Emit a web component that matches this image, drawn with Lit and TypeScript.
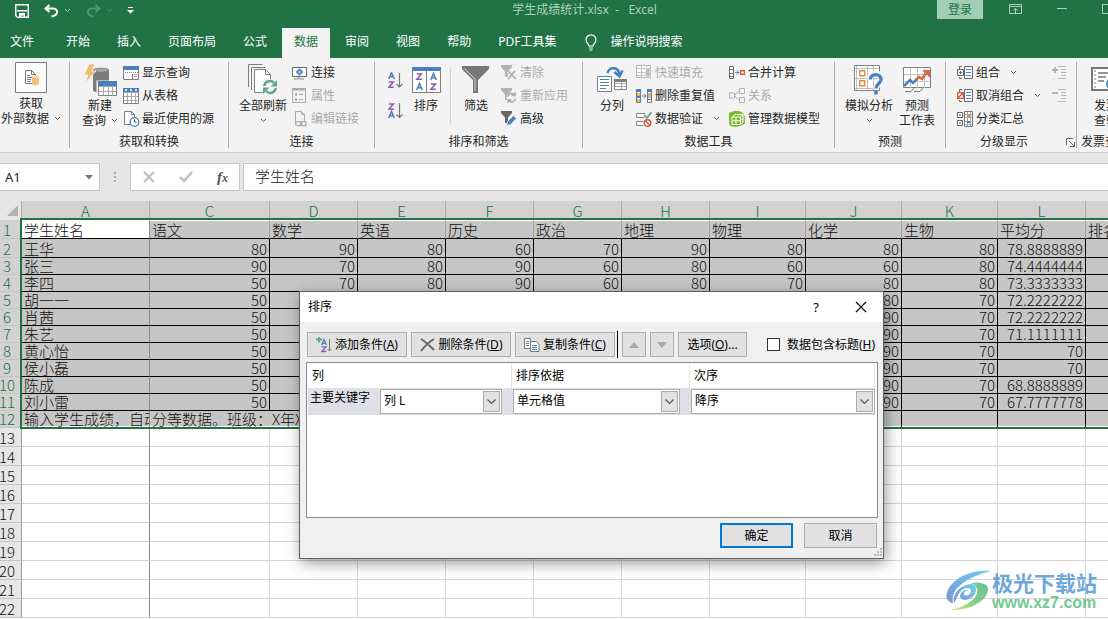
import { LitElement, html, svg, css, nothing, TemplateResult } from "lit";
import { customElement, property } from "lit/decorators.js";
import { classMap } from "lit/directives/class-map.js";

const G = "#7f7f7f";
const B = "#4a81bd";

const grid = (x: number, y: number, w: number, h: number, c: number, r: number, col = G, inner = "#a9a9a9") => {
  const parts: string[] = [];
  for (let i = 1; i < c; i++) parts.push(`M${x + Math.round((w / c) * i) + 0.5} ${y}v${h}`);
  for (let i = 1; i < r; i++) parts.push(`M${x} ${y + Math.round((h / r) * i) + 0.5}h${w}`);
  return svg`<path d="M${x} ${y}h${w}v${h}h${-w}z" fill="#fff"/>
    <path d=${parts.join("")} fill="none" stroke=${inner}/>
    <path d="M${x + 0.5} ${y + 0.5}h${w - 1}v${h - 1}h${1 - w}z" fill="none" stroke=${col}/>`;
};

const funnel = (c: string) => svg`<path d="M0 0h11v2L7 6.500V12H4V6.500L0 2z" fill=${c}/>`;
function glyph(k: string, x: number, y: number) {
  return k === "A"
    ? svg`<path transform="translate(${x} ${y})" d="M.7 7L3.5.5 6.3 7M1.6 4.8h3.8" fill="none" stroke=${B} stroke-width="1.5"/>`
    : svg`<path transform="translate(${x} ${y})" d="M.8.9h4.6L.9 6.2h4.9" fill="none" stroke="#8e5bb0" stroke-width="1.5"/>`;
}

const icons: Record<string, [number, number, TemplateResult]> = {
  save: [14, 14, svg`<path d="M.75.75h12.5v12.5H2.5L.75 11.5z" fill="none" stroke="#fff" stroke-width="1.5"/><path d="M2 6.8h10" stroke="#fff" stroke-width="1.5"/><path d="M4 9h6v5H8.500v-2.500H6.500V14H4z" fill="#fff"/>`],
  undo: [15, 14, svg`<path d="M5.500 1L1.500 4.500l4 3.500M2 4.500h6.500c6.500 0 6 7-1 8" fill="none" stroke="#fff" stroke-width="2"/>`],
  redo: [15, 14, svg`<path d="M9.500 1l4 3.500-4 3.500M13 4.500H6.500c-6.500 0-6 7 1 8" fill="none" stroke="#54936d" stroke-width="2"/>`],
  customize: [7, 7, svg`<path d="M1 .5h5" stroke="#fff"/><path d="M0 3h7L3.500 6.500z" fill="#fff"/>`],
  chev: [7, 5, svg`<path d="M1 1l2.500 2.500L6 1" fill="none" stroke="currentColor" stroke-width="1"/>`],
  bulb: [12, 17, svg`<path d="M4 12c0-2-3-3-3-6.200a5 5 0 0 1 10 0C11 9 8 10 8 12zM4 14h4M4.500 16h3" fill="none" stroke="#fff" stroke-width="1.200"/>`],
  ribbonopt: [13, 10, svg`<path d="M.5.5h12v9H.5zM0 2.500h13M6.500 9V4.500M4.500 6.500l2-2 2 2" fill="none" stroke="#a9d2ba"/>`],
  min: [10, 10, svg`<path d="M0 4.500h10" stroke="#a9d2ba"/>`],
  max: [10, 10, svg`<path d="M.5.5h9v9h-9z" fill="none" stroke="#a9d2ba"/>`],
  getdata: [32, 31, svg`<path d="M.5.5h31v30H.5z" fill="#fdfdfd" stroke="#7b7b7b"/><path d="M10.500 8.500h6l4 4v9h-10z" fill="#fff" stroke="#777"/><path d="M16.500 8.500v4h4M12 13.500h3M12 15.500h5M12 17.500h4M12 19.500h4" stroke="#777" fill="none"/><path d="M17 14.500v7c0 2 7 2 7 0v-7z" fill="#edc178"/><ellipse cx="20.500" cy="14.500" rx="3.500" ry="1.300" fill="#f7dca8"/>`],
  newquery: [33, 33, svg`<path d="M9 6c0-3 16-3 16 0v20c0 2-4 2.500-8 2.500S9 28 9 26z" fill="#7c7c7c"/><ellipse cx="17" cy="6" rx="7" ry="1.800" fill="#a5a5a5"/><path d="M5 0h6L8 7h4L1 19l3-8H0z" fill="#edbd72" stroke="#f3f3f3" stroke-width=".8"/><path d="M12.500 16.500H33V33H12.500z" fill="#f3f3f3"/>${grid(14, 17, 19, 15, 4, 3)}<path d="M14 17h19v5H14z" fill=${B}/>`],
  showquery: [16, 14, svg`${grid(0, 0, 16, 14, 1, 1)}<path d="M0 0h16v4H0z" fill=${B}/><path d="M2 6.500h13" stroke=${G} stroke-dasharray="1 1"/><path d="M9.500 8v6" stroke=${G}/><path d="M11 8.500h3M11 10.500h3" stroke="#a9a9a9"/>`],
  fromtable: [16, 16, svg`${grid(0, 0, 16, 16, 4, 4)}<path d="M0 0h16v4H0z" fill=${B}/><path d="M2 2h2M7 2h2M12 2h2" stroke="#fff" stroke-width="1.400"/>`],
  recent: [17, 16, svg`<path d="M1.500.5h7l3 3v10h-10z" fill="#fff" stroke=${G}/><path d="M8.500.5v3h3" fill="none" stroke=${G}/><circle cx="11.500" cy="11" r="4.300" fill="#fff" stroke=${B} stroke-width="1.300"/><path d="M11.500 8.500V11h2" fill="none" stroke="#555"/>`],
  refreshall: [31, 32, svg`<path d="M.5 23V.5h14" fill="none" stroke=${G}/><path d="M3.500 26V3.500h14" fill="none" stroke=${G}/><path d="M6.500 28.500v-23h11l5 5v18z" fill="#fff" stroke=${G}/><path d="M17.500 5.500v5h5" fill="none" stroke=${G}/><circle cx="22" cy="23" r="8" fill="#f3f3f3"/><path d="M16.300 22a5.500 5.500 0 0 1 9.700-3M27.700 24a5.500 5.500 0 0 1-9.700 3" fill="none" stroke="#67a58d" stroke-width="2.500"/><path d="M29 16v6.500h-6.500zM15 30v-6.500h6.500z" fill="#67a58d"/>`],
  connect: [16, 14, svg`<path d="M.5 1.500h14v9H.5z" fill="#fff" stroke="#666"/><path d="M7.500 3.500L10 6 7.500 8.500 5 6z" fill="none" stroke=${B} stroke-width="1.800"/><path d="M2 13h4l1-1.500L8 13h4" stroke="#888" fill="none"/>`],
  props: [14, 15, svg`<path d="M.5.500h13v14H.5z" fill="none" stroke="#aaa"/><path d="M0 1.500h14" stroke="#aaa" stroke-width="2"/><path d="M3.500 5.500h1v2h-1zM3.500 10.500h1v2h-1zM7 6.500h4M7 11.500h4" stroke="#aaa" fill="none"/>`],
  editlink: [15, 16, svg`<path d="M3.500 12V.5h6l3 3V10" fill="none" stroke="#aaa"/><path d="M9.500.5v3h3" fill="none" stroke="#aaa"/><rect x="3.700" y="10.700" width="6" height="4" rx="2" fill="none" stroke="#aaa" stroke-width="1.300"/><rect x="8.300" y="10.700" width="6" height="4" rx="2" fill="none" stroke="#aaa" stroke-width="1.300"/>`],
  asc: [15, 17, svg`${glyph("A", 0, 0)}${glyph("Z", 0, 9)}<path d="M11.500 1v14M8.500 12l3 3 3-3" fill="none" stroke="#777" stroke-width="1.200"/>`],
  desc: [15, 17, svg`${glyph("Z", 0, 0)}${glyph("A", 0, 8)}<path d="M11.500 0v14M8.500 11.500l3 3 3-3" fill="none" stroke="#777" stroke-width="1.200"/>`],
  sort: [29, 26, svg`<path d="M.5.5h28v25H.5z" fill="#fff" stroke=${G}/><path d="M0 0h29v4H0z" fill=${B}/><path d="M14.500 4v22" stroke=${G}/>${glyph("Z", 4, 6)}${glyph("A", 4, 16)}${glyph("A", 18, 6)}${glyph("Z", 18, 16)}`],
  filter: [28, 28, svg`<path d="M0 0h27v3L16 14v13h-5V14L0 3z" fill="#777"/><path d="M2.500 2.500L13 13v12" stroke="#d5d5d5" fill="none"/>`],
  clear: [16, 15, svg`${funnel("#b3b3b3")}<path d="M7 6l8 8M14 6l-7 8" stroke="#f3f3f3" stroke-width="3.500"/><path d="M7 6l8 8M14 6l-7 8" stroke="#a8a8a8" stroke-width="1.600"/>`],
  reapply: [16, 15, svg`${funnel("#b3b3b3")}<circle cx="10.500" cy="9.500" r="5" fill="#f3f3f3"/><path d="M6.500 9a4 4 0 0 1 7-2M14.500 10.500a4 4 0 0 1-7 2M14 4v3.500h-3.500M7 15v-3h3.500" fill="none" stroke="#a8a8a8" stroke-width="1.400"/>`],
  advanced: [16, 15, svg`${funnel("#666")}<path d="M5.500 14.500l1-4L12.500 4.500 15.500 7.500 9.500 13.500z" fill=${B} stroke="#f3f3f3" stroke-width=".8"/>`],
  split: [31, 26, svg`<path d="M.5 9.500h14v15H.5z" fill="#fff" stroke=${G}/><path d="M3 12.500h9M3 15.500h9M3 18.500h9M3 21.500h6" stroke=${B}/>${grid(17, 12, 13, 11, 2, 3)}<path d="M17 12h13v3H17z" fill=${G}/><path d="M10.500 6C12-1 22-.5 22.500 8" fill="none" stroke=${B} stroke-width="2.500"/><path d="M17.500 5l5 4.500 3-6" fill="none" stroke=${B} stroke-width="2.500"/>`],
  flash: [16, 15, svg`${grid(0, 0, 15, 13, 3, 4, "#b3b3b3", "#c4c4c4")}<path d="M10 4h5l-2 4h3l-6 7 1-5H9z" fill="#bcbcbc" stroke="#f3f3f3" stroke-width=".5"/>`],
  dedupe: [16, 14, svg`<path d="M.5.500h4v13h-4zM11.500.500h4v13h-4z" fill="#fff" stroke="#777"/><path d="M0 0h5v3H0zM0 7h5v2H0zM11 0h5v3h-5z" fill=${B}/><path d="M1 4h3v3H1zM1 10h3v3H1zM12 4h3v3h-3z" fill="#e9b565"/><path d="M11 8h5M11 10.500h5" stroke="#777"/><path d="M6 7h4M8 5l2 2-2 2" stroke=${B} fill="none"/>`],
  validate: [16, 16, svg`<path d="M9 2.500H.5v4H8M7 10.500H.5v4H7" fill="#fff" stroke=${G}/><path d="M8 4l3 3 4.500-6" fill="none" stroke="#67a58d" stroke-width="1.800"/><circle cx="11.500" cy="12" r="3.300" fill="#fff" stroke="#d9553b" stroke-width="1.400"/><path d="M9 9.500l5 5" stroke="#d9553b" stroke-width="1.400"/>`],
  consol: [16, 13, svg`${grid(0, 0, 5, 13, 1, 4, "#666", "#777")}<path d="M6 6.500h4M8 4.500l2 2-2 2" stroke=${B} fill="none"/><path d="M11.700 4.700h3.600v3.600h-3.600z" fill="#fff" stroke="#d9553b" stroke-width="1.400"/>`],
  relation: [16, 15, svg`<path d="M.5 5h5v5h-5zM10.500.500h5v5h-5zM10.500 9.500h5v5h-5z" fill="none" stroke="#b0b0b0"/><path d="M6 7l4-4M6 8l4 4" stroke="#b0b0b0"/>`],
  model: [16, 16, svg`<path d="M0 2c4-2.500 10-3 13-.5 3 2 3 4 3 11-4 3-9 4-13 3C0 15 0 14 0 2z" fill="#7cbb2c"/><path d="M3 6l3-2.500h8L11.500 6zM3 6v7.500h8.500V6M11.500 13.500L14 11V3.500M3 9.800h8.500L14 7.500M7 6v7.500" stroke="#fff" fill="none"/>`],
  whatif: [30, 30, svg`<path d="M.5.500h25v25H.5z" fill="#fff" stroke=${G}/><path d="M13.500 1v24M19.500 1v24M2.500 1v24M1 3.500h24M1 13.500h24M1 23.500h24" stroke="#bdbdbd"/><path d="M5.700 5.700h5v5h-5zM5.700 15.700h5v5h-5z" fill="#fff" stroke="#e08b3d" stroke-width="1.400"/><path d="M16 14c0-7 12-7 12 0 0 4-6 4-6 10" stroke="#f3f3f3" stroke-width="6" fill="none"/><path d="M16.500 14.500c0-6.500 10.500-6.500 10.500 0 0 4-5 4-5 9" stroke=${B} stroke-width="3.200" fill="none"/><path d="M20.200 26h3.500v3.500h-3.500z" fill=${B}/>`],
  forecast: [29, 26, svg`<path d="M.5.5h27v20h-27z" fill="#fff" stroke=${G}/><path d="M7.500 1v20M14.500 1v20M21.500 1v20M1 7.500h26M1 14.500h26" stroke="#c4c4c4"/><path d="M2 24.500h6l3-3.500M11 24.500h6l3-3.500" fill="none" stroke=${G}/><path d="M1 19l6-6 3 3 4-4" fill="none" stroke=${B} stroke-width="2.600"/><path d="M13 13l3-3 3 2 5-7" fill="none" stroke="#d9694a" stroke-width="2.600"/><path d="M19 3h8v8z" fill="#d9694a"/>`],
  group: [16, 14, svg`<path d="M5 .5H2.500V3M5 12.500H2.500V11M.500 3.500h6v6h-6zM2 6.500h3M3.500 5v3" fill="none" stroke="#666"/><path d="M7.500.500h8v12h-8z" fill="#fff" stroke="#666"/><path d="M9 3.500h5M9 6.500h5M9 9.500h5" stroke=${B}/>`],
  ungroup: [16, 14, svg`<path d="M5 .5H2.500V3M5 12.500H2.500V11" fill="none" stroke="#666"/><path d="M7.500.500h8v12h-8z" fill="#fff" stroke="#666"/><path d="M9 3.500h5M9 6.500h5M9 9.500h5" stroke=${B}/><path d="M.7 3.700h5.600v5.600H.7zM1 9l5-5" fill="#fff" stroke="#d9553b" stroke-width="1.300"/>`],
  subtotal: [16, 16, svg`<path d="M.5 1.500h5v5h-5zM.500 9.500h5v5h-5zM2 4h2M2 12h2" fill="#fff" stroke="#666"/>${grid(7, 0, 9, 16, 3, 5, "#777")}<path d="M10 4h3v2h-3z" fill="#e08b3d"/><path d="M10 10h3v2h-3z" fill=${B}/>`],
  showdetail: [14, 13, svg`<path d="M0 4h6M3 1v6" stroke="#b0b0b0" stroke-width="1.800"/><path d="M6 .5h8M9 3.500h5M9 6.500h5M9 9.500h5M6 12.500h8" stroke="#b8b8b8"/>`],
  hidedetail: [14, 13, svg`<path d="M0 4h6" stroke="#b0b0b0" stroke-width="1.800"/><path d="M6 .5h8M9 3.500h5M9 6.500h5M9 9.500h5M6 12.500h8" stroke="#b8b8b8"/>`],
  launcher: [9, 9, svg`<path d="M.5 7V.500H7M3 3l5 5M8.500 4v4.500H4" fill="none" stroke="#666"/>`],
  invoice: [30, 26, svg`<rect x="1" y="1" width="26" height="22" fill="#fff" stroke="#777" stroke-width="2"/><path d="M4 3v18" stroke="#777" stroke-dasharray="2 2"/><path d="M7 6h14M7 10h8M7 14h6" stroke="#777" stroke-width="1.600"/><circle cx="21" cy="17" r="6" fill="#3d8fd1"/>`],
  cancel: [12, 12, svg`<path d="M1 1l10 10M11 1L1 11" stroke="#bdbdbd" stroke-width="2"/>`],
  check: [14, 12, svg`<path d="M1 6l4 4 8-9" fill="none" stroke="#bdbdbd" stroke-width="2.400"/>`],
  addlevel: [16, 16, svg`<path d="M0 2.500h6M3 0v5.500" stroke="#67a58d" stroke-width="2"/><path transform="translate(5 2)" d="M.6 6L3 .6 5.400 6M1.500 4.300h3" fill="none" stroke=${B} stroke-width="1.200"/><path transform="translate(5 9)" d="M.8.900h4L.800 5.500h4.500" fill="none" stroke="#8e5bb0" stroke-width="1.300"/><path d="M13.500 2v12M11.500 12l2 2 2-2" fill="none" stroke="#777"/>`],
  del: [16, 14, svg`<path d="M1 1c5 3 9 7 13 11M14 1C9 4 5 8 1 13" stroke="#666" stroke-width="2" fill="none"/>`],
  copy: [16, 14, svg`<path d="M.5.500h6v10h-6z" fill="#fff" stroke="#777"/><path d="M2 3.500h3M2 5.500h3M2 7.500h3" stroke="#777"/><path d="M6.500 3.500h6l2.500 2.500v7.500H6.500z" fill="#fff" stroke="#777"/><path d="M8 7.500h5M8 9.500h5M8 11.500h5" stroke=${B}/>`],
  up: [10, 6, svg`<path d="M0 6l5-6 5 6z" fill="#a9a9a9"/>`],
  down: [10, 6, svg`<path d="M0 0l5 6 5-6z" fill="#a9a9a9"/>`],
  drop: [8, 5, svg`<path d="M0 0h8L4 4.500z" fill="#777"/>`],
  combo: [9, 6, svg`<path d="M.5.500l4 4 4-4" fill="none" stroke="#555" stroke-width="1.200"/>`],
  close: [12, 12, svg`<path d="M1 1l10 10M11 1L1 11" stroke="#111" stroke-width="1.200"/>`],
  grip: [8, 8, svg`<path d="M6 0h2v2H6zM3 3h2v2H3zM6 3h2v2H6zM0 6h2v2H0zM3 6h2v2H3zM6 6h2v2H6z" fill="#b8b8b8"/>`],
  corner: [11, 11, svg`<path d="M11 0v11H0z" fill="#b2b2b2"/>`],
  logo: [46, 42, svg`<defs><linearGradient id="lg1" x1="1" y1="0" x2="0" y2="1"><stop offset="0" stop-color="#5cc8ea"/><stop offset="1" stop-color="#6a86cf"/></linearGradient><linearGradient id="lg2" x1="1" y1="0" x2="0" y2="1"><stop offset="0" stop-color="#4fbb86"/><stop offset=".6" stop-color="#7cc97a"/><stop offset="1" stop-color="#f2e36a"/></linearGradient></defs><path d="M45 1C28-1 10 6 3 18c-5 9-2 14 4 15C4 20 18 8 45 1z" fill="url(#lg1)"/><path d="M8 33c-2-9 6-18 17-19 8 0 6 12-2 15-7 3-11-2-8-6 2-3 6-4 8-3-3 0-5 2-5 4 1 3 6 1 7-2 1-5-6-5-10-1-3 3-4 7-7 12z" fill="url(#lg1)"/><path d="M25 13c9-2 18 1 17 7-1 10-16 21-39 20 14-2 26-9 28-17 1-5-1-8-6-10z" fill="url(#lg2)"/>`],
};

const icon = (name: string) => {
  const [w, h, body] = icons[name];
  return html`<svg width=${w} height=${h} viewBox="0 0 ${w} ${h}" aria-hidden="true">${body}</svg>`;
};

const base = css`
  * { box-sizing: border-box; }
  svg { display: block; flex: none; }
  button, input, select { font: inherit; color: inherit; margin: 0; }
  button { border: 0; padding: 0; background: none; white-space: nowrap; }
`;

@customElement("excel-ribbon")
export class ExcelRibbon extends LitElement {
  static styles = [base, css`
    :host { display: block; background: #f3f3f3; border-bottom: 1px solid #d2d2d2; color: #262626; }
    .ribbon { display: flex; height: 94px; padding-top: 4px; overflow: hidden; }
    .group { display: flex; flex-direction: column; flex: none; height: 86px; border-right: 1px solid #ababab; }
    .body { display: flex; height: 70px; flex: none; }
    .label { display: flex; height: 16px; flex: none; align-items: center; justify-content: center; white-space: nowrap; line-height: 16px; margin-top: 2px; }
    .w-get { width: 70px; } .w-query { width: 159px; } .w-conn { width: 146px; } .w-sort { width: 208px; }
    .w-tools { width: 252px; } .w-fore { width: 111px; } .w-outline { width: 131px; }
    .w-inv { flex: 1 0 90px; border-right: 0; }
    .w-inv .label { justify-content: flex-start; padding-left: 4px; }
    .big { display: flex; flex-direction: column; align-items: center; flex: none; line-height: 15px; }
    .pic { display: flex; height: 36px; align-items: center; }
    .big.short .pic { height: 34px; align-items: flex-start; }
    .line { display: flex; height: 15px; align-items: center; gap: 5px; }
    .line svg, .more svg { color: #555; }
    .col { display: flex; flex-direction: column; flex: none; margin-top: -1px; }
    .small { display: flex; height: 23px; align-items: center; line-height: 16px; }
    .slot { display: flex; width: 19px; }
    .more { margin-left: 10px; }
    .off { color: #aaa; }
    .az { display: flex; flex-direction: column; gap: 14px; padding-top: 10px; flex: none; }
    .rule { width: 1px; height: 56px; margin-top: 6px; background: #d2d2d2; flex: none; }
    .detail { display: flex; flex-direction: column; gap: 10px; margin: 4px 10px 0 auto; }
    .w-get .big { width: 62px; }
    .w-query .body { gap: 4px; padding-left: 11px; } .w-query .big { width: 38px; }
    .w-conn .body { gap: 4px; padding-left: 9px; } .w-conn .big { width: 50px; }
    .w-sort .body { padding-left: 13px; } .w-sort .big { width: 42px; margin: 0 3px 0 2px; }
    .w-sort .rule + .big { margin: 0 4px; }
    .w-tools .body { padding-left: 13px; } .w-tools .big { width: 32px; margin-right: 8px; }
    .w-tools .col { width: 93px; }
    .w-fore .body { gap: 5px; padding-left: 10px; } .w-fore .big { width: 48px; } .w-fore .big + .big { width: 38px; }
    .w-outline .body { padding-left: 11px; }
    .w-outline .label { padding-left: 33px; gap: 38px; }
    .w-inv .body { padding-left: 14px; }
    .w-inv .big { align-items: flex-start; } .w-inv .line { padding-left: 3px; }
  `];

  big(ic: string, l1: string, l2 = "", more = false, short = false) {
    return html`<button class=${classMap({ big: true, short })}>
      <span class="pic">${icon(ic)}</span>
      <span class="line">${l1}</span>
      <span class="line">${l2}${more ? icon("chev") : nothing}</span>
    </button>`;
  }
  small(ic: string, text: string, off = false, more = false) {
    return html`<button class=${classMap({ small: true, off })} ?disabled=${off}>
      <span class="slot">${icon(ic)}</span>${text}${more ? html`<span class="more">${icon("chev")}</span>` : nothing}
    </button>`;
  }
  render() {
    return html`<div class="ribbon">
      <section class="group w-get">
        <div class="body">${this.big("getdata", "获取", "外部数据", true, true)}</div>
      </section>
      <section class="group w-query">
        <div class="body">${this.big("newquery", "新建", "查询", true)}
          <div class="col">${this.small("showquery", "显示查询")}${this.small("fromtable", "从表格")}${this.small("recent", "最近使用的源")}</div>
        </div>
        <div class="label">获取和转换</div>
      </section>
      <section class="group w-conn">
        <div class="body">${this.big("refreshall", "全部刷新", "", true)}
          <div class="col">${this.small("connect", "连接")}${this.small("props", "属性", true)}${this.small("editlink", "编辑链接", true)}</div>
        </div>
        <div class="label">连接</div>
      </section>
      <section class="group w-sort">
        <div class="body">
          <div class="az"><button aria-label="升序">${icon("asc")}</button><button aria-label="降序">${icon("desc")}</button></div>
          ${this.big("sort", "排序")}
          <span class="rule"></span>
          ${this.big("filter", "筛选")}
          <div class="col">${this.small("clear", "清除", true)}${this.small("reapply", "重新应用", true)}${this.small("advanced", "高级")}</div>
        </div>
        <div class="label">排序和筛选</div>
      </section>
      <section class="group w-tools">
        <div class="body">${this.big("split", "分列")}
          <div class="col">${this.small("flash", "快速填充", true)}${this.small("dedupe", "删除重复值")}${this.small("validate", "数据验证", false, true)}</div>
          <div class="col">${this.small("consol", "合并计算")}${this.small("relation", "关系", true)}${this.small("model", "管理数据模型")}</div>
        </div>
        <div class="label">数据工具</div>
      </section>
      <section class="group w-fore">
        <div class="body">${this.big("whatif", "模拟分析", "", true)}${this.big("forecast", "预测", "工作表")}</div>
        <div class="label">预测</div>
      </section>
      <section class="group w-outline">
        <div class="body">
          <div class="col">${this.small("group", "组合", false, true)}${this.small("ungroup", "取消组合", false, true)}${this.small("subtotal", "分类汇总")}</div>
          <div class="detail">${icon("showdetail")}${icon("hidedetail")}</div>
        </div>
        <div class="label"><span>分级显示</span><button aria-label="分级显示设置">${icon("launcher")}</button></div>
      </section>
      <section class="group w-inv">
        <div class="body">${this.big("invoice", "发票", "查验")}</div>
        <div class="label">发票查验</div>
      </section>
    </div>`;
  }
}

const COLUMNS = ["A", "C", "D", "E", "F", "G", "H", "I", "J", "K", "L", ""];
const HEADINGS = ["学生姓名", "语文", "数学", "英语", "历史", "政治", "地理", "物理", "化学", "生物", "平均分", "排名"];
const ROWS: string[][] = [
  ["王华", "80", "90", "80", "60", "70", "90", "80", "80", "80", "78.8888889", ""],
  ["张三", "90", "70", "80", "90", "60", "80", "60", "60", "80", "74.4444444", ""],
  ["李四", "50", "70", "80", "90", "60", "80", "70", "80", "80", "73.3333333", ""],
  ["胡一一", "50", "", "", "", "", "", "", "80", "70", "72.2222222", ""],
  ["肖茜", "50", "", "", "", "", "", "", "90", "70", "72.2222222", ""],
  ["朱艺", "50", "", "", "", "", "", "", "90", "70", "71.1111111", ""],
  ["黄心怡", "50", "", "", "", "", "", "", "90", "70", "70", ""],
  ["侯小磊", "50", "", "", "", "", "", "", "90", "70", "70", ""],
  ["陈成", "50", "", "", "", "", "", "", "90", "70", "68.8888889", ""],
  ["刘小雷", "50", "", "", "", "", "", "", "90", "70", "67.7777778", ""],
];
const EMPTY_ROWS = Array.from({ length: 10 }, (_, i) => 13 + i);

@customElement("excel-sheet")
export class ExcelSheet extends LitElement {
  static styles = [base, css`
    :host { display: block; position: relative; overflow: hidden; background: #fff; color: #111; font-family: "Noto Sans CJK SC", sans-serif; font-size: 15px; }
    table { table-layout: fixed; width: 100%; border-collapse: separate; border-spacing: 0; }
    .c-head { width: 22px; } .c-a { width: 128px; } .c-c { width: 120px; } .c-s { width: 88px; } .c-m { width: 96px; }
    th, td { padding: 0 2px; overflow: hidden; white-space: nowrap; font-weight: 300; text-align: left; vertical-align: bottom; line-height: 16px; height: 17px; }
    .tall td, .tall th { height: 19px; }
    td { border-right: 1px solid #d4d4d4; border-bottom: 1px solid #d4d4d4; }
    td:last-child { border-right: 0; }
    .top th { height: 19px; line-height: 17px; text-align: center; background: #d2d2d2; color: #217346; border-right: 1px solid #ababab; vertical-align: top; padding-top: 1px; }
    .top .corner { background: #e6e6e6; padding: 4px 3px 0 7px; }
    .top th:last-child { border-right: 0; }
    tbody th { padding: 0; background: #e6e6e6; border-right: 1px solid #9a9a9a; border-bottom: 1px solid #c4c4c4; }
    .num { display: flex; justify-content: center; width: 14px; }
    .sel th { background: #d2d2d2; color: #217346; }
    .sel td { background: #c6c6c6; border-color: #000; }
    .sel td.n { text-align: right; }
    .first td { border-right-color: #a0a0a0; border-top: 1px solid #fff; }
    .first td.active { background: #fff; }
    td.frozen, .sel td.frozen { border-right-color: #8c8c8c; }
    .last td { box-shadow: inset 0 -1px #fff; }
    .marquee { position: absolute; left: 20px; right: -4px; top: 17px; height: 211px; border: 2px solid #217346; pointer-events: none; }
  `];
  render() {
    return html`<table>
      <colgroup>
        <col class="c-head" /><col class="c-a" /><col class="c-c" />
        <col class="c-s" /><col class="c-s" /><col class="c-s" /><col class="c-s" /><col class="c-s" />
        <col class="c-m" /><col class="c-m" /><col class="c-m" /><col class="c-s" /><col />
      </colgroup>
      <thead><tr class="top"><th class="corner">${icon("corner")}</th>${COLUMNS.map((c) => html`<th>${c}</th>`)}</tr></thead>
      <tbody>
        <tr class="sel tall first"><th><span class="num">1</span></th>${HEADINGS.map((h, i) => html`<td class=${classMap({ active: i === 0, frozen: i === 0 })}>${h}</td>`)}</tr>
        ${ROWS.map((r, n) => html`<tr class=${classMap({ sel: true, tall: n === 0 })}>
          <th><span class="num">${n + 2}</span></th>
          ${r.map((v, i) => html`<td class=${classMap({ frozen: i === 0, n: i > 0 })}>${v}</td>`)}
        </tr>`)}
        <tr class="sel last">
          <th><span class="num">12</span></th>
          <td class="frozen">输入学生成绩，自动</td>
          <td colspan="4">分等数据。班级：X年X班</td>
          <td></td><td></td><td></td><td></td><td></td><td></td><td></td>
        </tr>
        ${EMPTY_ROWS.map((n) => html`<tr class="tall"><th><span class="num">${n}</span></th>${COLUMNS.map((_, i) => html`<td class=${classMap({ frozen: i === 0 })}></td>`)}</tr>`)}
      </tbody>
    </table>
    <div class="marquee"></div>`;
  }
}

@customElement("sort-dialog")
export class SortDialog extends LitElement {
  static styles = [base, css`
    :host { display: block; color: #000; }
    .window { background: #f0f0f0; border: 1px solid #5f5f5f; box-shadow: 2px 4px 14px rgba(0, 0, 0, 0.4); }
    .title { display: flex; align-items: center; height: 30px; padding: 0 16px 0 8px; background: #fff; }
    .title span { flex: 1; }
    .help { width: 20px; font-size: 13px; margin-right: 29px; }
    .tools { display: flex; align-items: center; gap: 4px; padding: 9px 8px 4px 7px; }
    .btn { display: flex; align-items: center; justify-content: center; height: 25px; padding: 0 8px; gap: 3px; background: #e1e1e1; border: 1px solid #adadad; flex: none; }
    .wide { width: 100px; padding: 0; }
    .arrow { width: 24px; padding: 0; }
    .options { width: 69px; padding: 0; }
    .bar { width: 1px; height: 27px; margin: 0 0 0 -2px; background: #000; }
    .check { display: flex; align-items: center; gap: 7px; margin-left: auto; white-space: nowrap; }
    .check input { appearance: none; width: 13px; height: 13px; border: 1px solid #333; background: #fff; }
    .list { margin: 0 5px 0 6px; height: 156px; border: 1px solid #828790; background: #fff; padding: 1px 2px 0 1px; }
    .cols { display: grid; grid-template-columns: 204px 178px 1fr; }
    .cols span { height: 24px; padding: 4px 4px 0; line-height: 16px; border-right: 1px solid #e5e5e5; }
    .key { display: grid; grid-template-columns: 72px 122px 178px 1fr; height: 27px; align-items: center; background: #dfdfe7; }
    .key label { padding-left: 2px; align-self: start; line-height: 19px; white-space: nowrap; }
    .combo { display: grid; height: 25px; }
    .mid { margin-left: 11px; }
    .end { margin-left: 11px; }
    .combo select, .combo span { grid-area: 1 / 1; }
    .combo select { appearance: none; width: 100%; border: 1px solid #adadad; border-radius: 0; background: #fff; padding: 0 3px 2px; }
    .combo span { display: flex; justify-content: center; align-items: center; justify-self: end; align-self: center; width: 17px; height: 21px; margin-right: 2px; border: 1px solid #adadad; background: #e1e1e1; pointer-events: none; }
    .foot { display: flex; justify-content: flex-end; gap: 11px; padding: 5px 6px 0 0; height: 30px; }
    .act { width: 73px; }
    .primary { border: 2px solid #0078d7; }
    .grip { display: flex; justify-content: flex-end; padding: 0 1px 2px 0; }
  `];
  render() {
    return html`<div class="window" role="dialog" aria-label="排序">
      <div class="title"><span>排序</span><button class="help" aria-label="帮助">?</button><button aria-label="关闭">${icon("close")}</button></div>
      <div class="tools">
        <button class="btn wide">${icon("addlevel")}<span>添加条件(<u>A</u>)</span></button>
        <button class="btn wide">${icon("del")}<span>删除条件(<u>D</u>)</span></button>
        <button class="btn wide">${icon("copy")}<span>复制条件(<u>C</u>)</span></button>
        <span class="bar"></span>
        <button class="btn arrow" aria-label="上移">${icon("up")}</button>
        <button class="btn arrow" aria-label="下移">${icon("down")}</button>
        <button class="btn options"><span>选项(<u>O</u>)...</span></button>
        <label class="check"><input type="checkbox" /><span>数据包含标题(<u>H</u>)</span></label>
      </div>
      <div class="list">
        <div class="cols"><span>列</span><span>排序依据</span><span>次序</span></div>
        <div class="key">
          <label for="key">主要关键字</label>
          <div class="combo"><select id="key"><option>列 L</option></select><span>${icon("combo")}</span></div>
          <div class="combo mid"><select aria-label="排序依据"><option>单元格值</option></select><span>${icon("combo")}</span></div>
          <div class="combo end"><select aria-label="次序"><option>降序</option></select><span>${icon("combo")}</span></div>
        </div>
      </div>
      <div class="foot"><button class="btn act primary">确定</button><button class="btn act">取消</button></div>
      <div class="grip">${icon("grip")}</div>
    </div>`;
  }
}

@customElement("app-root")
export class AppRoot extends LitElement {
  @property() fileName = "学生成绩统计.xlsx";

  static styles = [base, css`
    :host { display: flex; flex-direction: column; position: relative; height: 100vh; overflow: hidden; background: #e6e6e6; font: 12px/16px "Noto Sans", "Noto Sans CJK SC", sans-serif; color: #262626; }
    .titlebar { display: flex; height: 28px; padding-left: 15px; background: #217346; color: #a9d2ba; overflow: hidden; flex: none; }
    .qat { display: flex; align-items: center; height: 21px; flex: none; }
    .qat .g { margin-left: 15px; } .qat .c { margin-left: 5px; color: #a9d2ba; } .qat .dim { color: #54936d; } .qat .z { margin-left: 14px; }
    .name { flex: 1; text-align: center; padding: 2px 0 0 98px; white-space: pre; }
    .login { width: 46px; height: 19px; background: #a0cdb4; color: #217346; }
    .win { display: flex; flex: none; width: 125px; padding: 4px 0 0 26px; gap: 35px; }
    .win button { display: flex; height: 10px; }
    .tabs { display: flex; height: 30px; padding-left: 10px; gap: 3px; background: #217346; color: #fff; flex: none; white-space: nowrap; overflow: hidden; }
    .tab { padding: 0 12px 3px; height: 30px; }
    .file { padding-left: 0; margin-right: 5px; }
    .on { background: #f3f3f3; color: #217346; }
    .tell { display: flex; align-items: center; gap: 13px; margin-left: 14px; padding-bottom: 2px; }
    .formula { display: flex; padding: 10px 0; height: 48px; flex: none; }
    .box { display: flex; align-items: center; height: 28px; background: #fff; border: 1px solid #c6c6c6; flex: none; }
    .namebox { width: 100px; border-left: 0; padding: 0 6px 0 5px; font-size: 13px; }
    .namebox input { flex: 1; min-width: 0; border: 0; padding: 0; background: none; outline: 0; }
    .dots { display: flex; flex-direction: column; justify-content: center; gap: 2px; width: 30px; align-items: center; }
    .dots i { width: 2px; height: 2px; background: #aaa; }
    .fx { width: 110px; padding: 0 11px 0 12px; justify-content: space-between; }
    .fx em { font: italic bold 15px/20px "Liberation Serif", serif; color: #555; }
    .fx em small { font-size: 12px; }
    .entry { flex: 1; margin-left: 3px; border-right: 0; padding: 0 11px; }
    .entry input { width: 100%; border: 0; padding: 0 0 2px; font-family: "Noto Sans CJK SC", sans-serif; font-size: 15px; font-weight: 300; outline: 0; background: none; }
    excel-ribbon { flex: none; }
    excel-sheet { flex: 1; min-height: 0; }
    .dialog { position: absolute; left: 299px; top: 291px; width: 585px; }
    .mark { position: absolute; right: 11px; bottom: 7px; display: flex; align-items: center; opacity: 0.88; }
    .mark p { margin: 0; font: bold 21px/23px "Noto Sans CJK SC", sans-serif; color: #5b9bd5; }
    .mark p + p { font: bold 16px/18px "Liberation Sans", sans-serif; color: #5fc283; }
  `];

  render() {
    const tabs = ["开始", "插入", "页面布局", "公式", "数据", "审阅", "视图", "帮助", "PDF工具集"];
    return html`
      <header class="titlebar">
        <div class="qat">
          <button aria-label="保存">${icon("save")}</button>
          <button class="g" aria-label="撤消">${icon("undo")}</button><button class="c" aria-label="撤消列表">${icon("chev")}</button>
          <button class="g dim" aria-label="恢复">${icon("redo")}</button><button class="c dim" aria-label="恢复列表">${icon("chev")}</button>
          <button class="z" aria-label="自定义">${icon("customize")}</button>
        </div>
        <div class="name">${this.fileName}  -   Excel</div>
        <button class="login">登录</button>
        <div class="win">
          <button aria-label="功能区选项">${icon("ribbonopt")}</button><button aria-label="最小化">${icon("min")}</button><button aria-label="最大化">${icon("max")}</button>
        </div>
      </header>
      <nav class="tabs">
        <button class="tab file">文件</button>
        ${tabs.map((t) => html`<button class=${classMap({ tab: true, on: t === "数据" })}>${t}</button>`)}
        <button class="tell">${icon("bulb")}操作说明搜索</button>
      </nav>
      <excel-ribbon></excel-ribbon>
      <div class="formula">
        <div class="box namebox"><input aria-label="名称框" .value=${"A1"} /><button aria-label="名称列表">${icon("drop")}</button></div>
        <div class="dots"><i></i><i></i><i></i></div>
        <div class="box fx">
          <button aria-label="取消">${icon("cancel")}</button><button aria-label="输入">${icon("check")}</button><button aria-label="插入函数"><em>f<small>x</small></em></button>
        </div>
        <div class="box entry"><input aria-label="编辑栏" .value=${"学生姓名"} /></div>
      </div>
      <excel-sheet></excel-sheet>
      <sort-dialog class="dialog"></sort-dialog>
      <div class="mark">${icon("logo")}<div><p>极光下载站</p><p>www.xz7.com</p></div></div>
    `;
  }
}
